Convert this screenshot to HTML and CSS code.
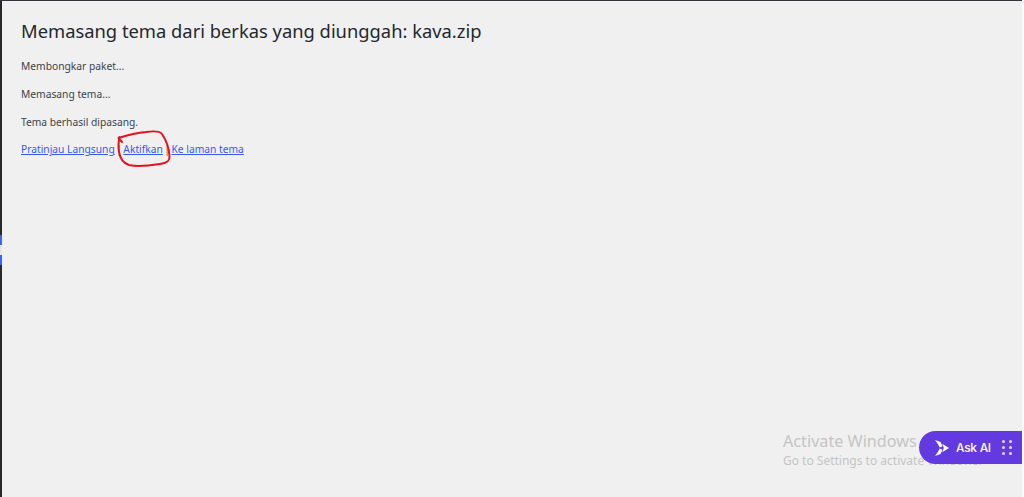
FILE: index.html
```html
<!DOCTYPE html>
<html lang="id">
<head>
<meta charset="utf-8">
<title>Memasang tema</title>
<link rel="stylesheet" href="styles.css">
</head>
<body>
<div class="frame">
  <div class="edge"><span class="edge-dark"></span><span class="edge-blue"></span><span class="edge-gap"></span><span class="edge-blue short"></span><span class="edge-dark long"></span></div>
  <main class="content">
    <h1 class="title">Memasang tema dari berkas yang diunggah: kava.zip</h1>
    <p class="line">Membongkar paket...</p>
    <p class="line">Memasang tema...</p>
    <p class="line">Tema berhasil dipasang.</p>
    <p class="line links"><a href="#">Pratinjau Langsung</a><span class="sep">|</span><a href="#">Aktifkan</a><span class="sep">|</span><a href="#">Ke laman tema</a></p>
  </main>
</div>
<svg class="scribble" width="1024" height="497" viewBox="0 0 1024 497" aria-hidden="true">
  <path d="M122 142 L118.500 138 C125 136 136 133 146 132 C153 131 160 131 162 134 C166 140 169 148 169.500 156 C170 161 167 163 160 164 C150 165.500 138 167 129 165 C123 163 120 158 119 152 C118 147 118.500 142 119.500 137" fill="none" stroke="#e8101c" stroke-width="2" stroke-linecap="round" stroke-linejoin="round"/>
</svg>
<div class="watermark">
  <div class="wm-title">Activate Windows</div>
  <div class="wm-sub">Go to Settings to activate Windows.</div>
</div>
<div class="ask">
  <svg class="ask-icon" width="14" height="16" viewBox="0 0 14 16" aria-hidden="true">
    <path d="M0 0 L5.500 2 L7.500 6.300 L4.700 7.600 L2.700 3.800 Z M0 16 L5.500 14 L7.500 9.700 L4.700 8.400 L2.700 12.200 Z M7.300 3.800 L14 8 L7.300 12.200 L8.800 8 Z" fill="#fff"/>
  </svg>
  <span class="ask-label">Ask AI</span>
  <span class="dots"><i></i><i></i><i></i><i></i><i></i><i></i></span>
</div>
</body>
</html>
```

FILE: styles.css
```css
* { box-sizing: border-box; }
html, body { margin: 0; height: 100%; overflow: hidden; }
body {
  background: #fbfbfb;
  font-family: "Noto Sans", "Open Sans", sans-serif;
  color: #3c434a;
}
.frame {
  display: flex;
  width: 1022px;
  height: 497px;
  background: #f0f0f1;
  border-top: 1px solid #33363a;
}
.edge {
  display: flex;
  flex-direction: column;
  width: 2px;
  height: 100%;
}
.edge-dark { display: block; height: 234px; background: #26282b; }
.edge-dark.long { height: 232px; background: #26282b; }
.edge-blue { display: block; height: 10px; background: #3d63f5; }
.edge-blue.short { height: 10px; }
.edge-gap { display: block; height: 10px; background: #e6e6e8; }
.content {
  flex: 1;
  padding: 18px 0 0 19px;
}
.title {
  margin: 0 0 17px;
  font-size: 18.350px;
  line-height: 23px;
  font-weight: 400;
  color: #23282d;
}
.line {
  margin: 0 0 12.800px;
  font-size: 10.250px;
  line-height: 15px;
}
.links a { color: #3858e9; }
.sep { margin: 0 1.500px; color: #50575e; }
.scribble { position: absolute; left: 0; top: 0; pointer-events: none; }
.watermark {
  position: absolute;
  left: 783px;
  top: 431px;
  color: #c4c4c4;
}
.wm-title { font-size: 16.200px; line-height: 21px; }
.wm-sub { font-size: 12px; line-height: 17px; }
.ask {
  position: absolute;
  left: 919px;
  top: 431px;
  width: 103px;
  height: 33px;
  display: flex;
  align-items: center;
  padding-left: 16px;
  background: #6339e0;
  border-radius: 17px 0 0 17px;
  color: #fff;
}
.ask-icon { flex: none; }
.ask-label {
  margin-left: 7px;
  font-family: "Inter", sans-serif;
  font-size: 12px;
  font-weight: 500;
  letter-spacing: -0.300px;
}
.dots {
  display: grid;
  grid-template-columns: 3px 3px;
  gap: 3px 4px;
  margin-left: 11px;
}
.dots i { display: block; width: 3px; height: 3px; border-radius: 50%; background: #e6defc; }
```
